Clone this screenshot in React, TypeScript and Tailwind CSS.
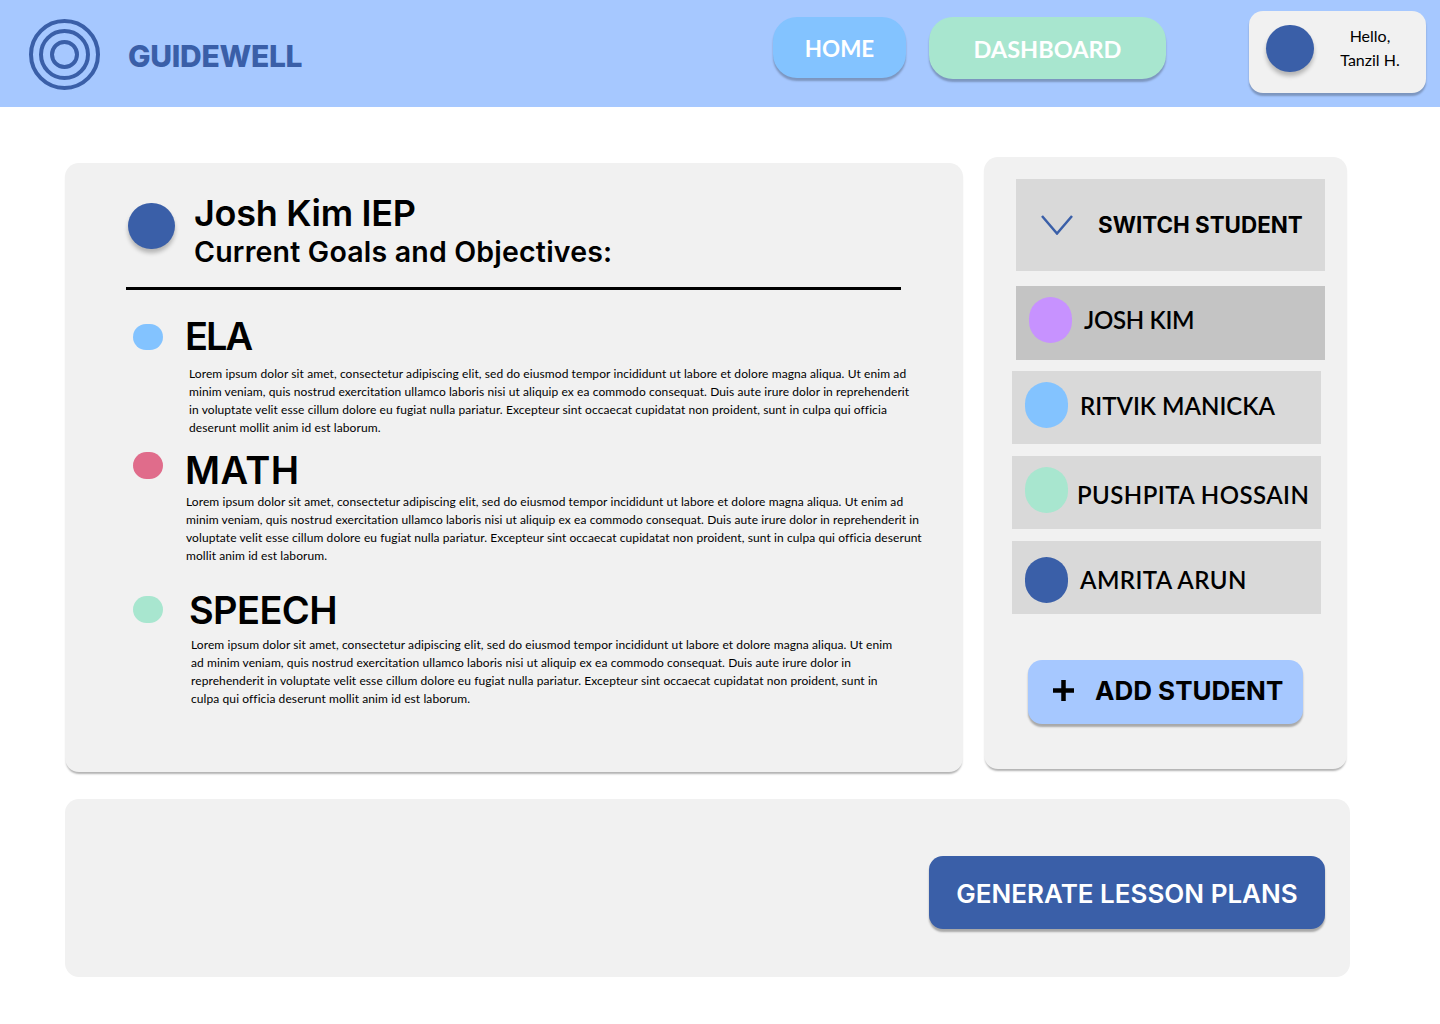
const poppins = "font-['Inter',sans-serif]";
const nunito = "font-['Lato',sans-serif]";

function Lines({ lines, className }: { lines: string[]; className: string }) {
  return (
    <div className={`${nunito} text-[12px] leading-[18px] tracking-[0.09px] text-black ${className}`}>
      {lines.map((line) => (
        <div key={line} className="whitespace-nowrap">
          {line}
        </div>
      ))}
    </div>
  );
}

function StudentRow({
  name,
  dot,
  className,
  textClass,
}: {
  name: string;
  dot: string;
  className: string;
  textClass: string;
}) {
  return (
    <div className={`flex w-[309px] h-[73px] items-start pl-[13px] ${className}`}>
      <div className={`w-[43px] h-[46px] rounded-full shrink-0 ${dot}`} />
      <span className={`${nunito} text-[24px] leading-[30px] font-semibold text-black whitespace-nowrap ${textClass}`}>
        {name}
      </span>
    </div>
  );
}

export default function App() {
  return (
    <div className="w-[1440px] h-[1024px] bg-white overflow-hidden">
      <header className="flex h-[107px] bg-[#a6c8ff]">
        <div className="ml-[29px] mt-[19px] w-[71px] h-[71px] shrink-0">
          <svg width="71" height="71" viewBox="0 0 71 71" fill="none" stroke="#3a5fa8" strokeWidth="4">
            <circle cx="35.5" cy="35.5" r="33.5" />
            <circle cx="35.5" cy="35.5" r="23.5" />
            <circle cx="35.5" cy="35.5" r="12.5" />
          </svg>
        </div>
        <div className={`${poppins} ml-[28px] mt-[35px] h-[42px] w-[620px] text-[30px] leading-[42px] tracking-[-0.3px] font-extrabold text-[#3a5fa8]`}>
          GUIDEWELL
        </div>
        <button className={`${nunito} ml-[25px] mt-[17px] w-[133px] h-[61px] pt-[3px] rounded-[24px] bg-[#83c3ff] text-[22.4px] font-bold text-white shadow-[0_3px_2px_rgba(0,0,0,0.25)]`}>
          HOME
        </button>
        <button className={`${nunito} ml-[23px] mt-[17px] w-[237px] h-[62px] pt-[3px] rounded-[24px] bg-[#a8e6cf] text-[23.5px] font-bold text-white shadow-[0_3px_2px_rgba(0,0,0,0.25)]`}>
          DASHBOARD
        </button>
        <div className="ml-[83px] mt-[11px] flex w-[177px] h-[82px] items-start rounded-[14px] bg-[#f1f1f1] shadow-[0_3px_2px_rgba(0,0,0,0.25)]">
          <div className="ml-[17px] mt-[14px] w-[48px] h-[47px] rounded-full bg-[#3a5fa8] shadow-[0_4px_4px_rgba(0,0,0,0.25)]" />
          <div className={`${nunito} ml-[18px] mt-[13px] w-[76px] text-center text-[16px] leading-[24px] text-black`}>
            <div>Hello,</div>
            <div>Tanzil H.</div>
          </div>
        </div>
      </header>

      <main className="pl-[65px]">
        <div className="flex items-start">
          <section className="mt-[56px] w-[898px] h-[609px] rounded-[14px] bg-[#f1f1f1] shadow-[0_3px_2px_-1px_rgba(0,0,0,0.3)]">
            <div className="flex pl-[63px] pt-[30px]">
              <div className="mt-[10px] w-[47px] h-[46px] rounded-full bg-[#3a5fa8] shadow-[0_4px_4px_rgba(0,0,0,0.25)]" />
              <div className="ml-[19px]">
                <h1 className={`${poppins} text-[36px] leading-[40px] tracking-[-0.3px] font-semibold text-black`}>Josh Kim IEP</h1>
                <h2 className={`${poppins} mt-[3px] text-[28.5px] leading-[32px] tracking-[0.2px] font-semibold text-black`}>
                  Current Goals and Objectives:
                </h2>
              </div>
            </div>
            <div className="ml-[61px] mt-[19px] w-[775px] h-[3px] bg-black" />

            <div className="flex items-start mt-[23px] pl-[68px]">
              <div className="mt-[11px] w-[30px] h-[26px] rounded-full bg-[#83c3ff]" />
              <div className={`${poppins} ml-[22px] text-[38px] leading-[46px] tracking-[-2px] font-semibold text-black`}>ELA</div>
            </div>
            <Lines
              className="ml-[124px] mt-[6px]"
              lines={[
                "Lorem ipsum dolor sit amet, consectetur adipiscing elit, sed do eiusmod tempor incididunt ut labore et dolore magna aliqua. Ut enim ad",
                "minim veniam, quis nostrud exercitation ullamco laboris nisi ut aliquip ex ea commodo consequat. Duis aute irure dolor in reprehenderit",
                "in voluptate velit esse cillum dolore eu fugiat nulla pariatur. Excepteur sint occaecat cupidatat non proident, sunt in culpa qui officia",
                "deserunt mollit anim id est laborum.",
              ]}
            />

            <div className="flex items-start mt-[15px] pl-[68px]">
              <div className="w-[30px] h-[27px] rounded-full bg-[#e06c8b]" />
              <div className={`${poppins} ml-[22px] mt-[-5px] text-[38px] leading-[46px] tracking-[0.4px] font-semibold text-black`}>MATH</div>
            </div>
            <Lines
              className="ml-[121px] mt-[0px]"
              lines={[
                "Lorem ipsum dolor sit amet, consectetur adipiscing elit, sed do eiusmod tempor incididunt ut labore et dolore magna aliqua. Ut enim ad",
                "minim veniam, quis nostrud exercitation ullamco laboris nisi ut aliquip ex ea commodo consequat. Duis aute irure dolor in reprehenderit in",
                "voluptate velit esse cillum dolore eu fugiat nulla pariatur. Excepteur sint occaecat cupidatat non proident, sunt in culpa qui officia deserunt",
                "mollit anim id est laborum.",
              ]}
            />

            <div className="flex items-start mt-[18px] pl-[68px]">
              <div className="mt-[13px] w-[30px] h-[27px] rounded-full bg-[#a8e6cf]" />
              <div className={`${poppins} ml-[26px] mt-[4px] text-[38px] leading-[46px] tracking-[-0.6px] font-semibold text-black`}>SPEECH</div>
            </div>
            <Lines
              className="ml-[126px] mt-[3px]"
              lines={[
                "Lorem ipsum dolor sit amet, consectetur adipiscing elit, sed do eiusmod tempor incididunt ut labore et dolore magna aliqua. Ut enim",
                "ad minim veniam, quis nostrud exercitation ullamco laboris nisi ut aliquip ex ea commodo consequat. Duis aute irure dolor in",
                "reprehenderit in voluptate velit esse cillum dolore eu fugiat nulla pariatur. Excepteur sint occaecat cupidatat non proident, sunt in",
                "culpa qui officia deserunt mollit anim id est laborum.",
              ]}
            />
          </section>

          <aside className="ml-[21px] mt-[50px] w-[363px] h-[612px] pt-[22px] rounded-[14px] bg-[#f1f1f1] shadow-[0_3px_2px_-1px_rgba(0,0,0,0.3)]">
            <div className="ml-[32px] flex w-[309px] h-[92px] items-center bg-[#d9d9d9]">
              <svg className="ml-[25px] shrink-0" width="32" height="20" viewBox="0 0 32 20" fill="none" stroke="#3a5fa8" strokeWidth="2.5">
                <path d="M1 1 L16 18.5 L31 1" />
              </svg>
              <span className={`${poppins} ml-[25px] text-[22.4px] font-bold text-black whitespace-nowrap`}>
                SWITCH STUDENT
              </span>
            </div>
            <StudentRow name="JOSH KIM" dot="mt-[11px] bg-[#c792ff]" className="ml-[32px] mt-[15px] h-[74px] bg-[#c4c4c4]" textClass="ml-[12px] mt-[19px] tracking-[-0.3px]" />
            <StudentRow name="RITVIK MANICKA" dot="mt-[11px] bg-[#83c3ff]" className="ml-[28px] mt-[11px] bg-[#d9d9d9]" textClass="ml-[12px] mt-[20px]" />
            <StudentRow name="PUSHPITA HOSSAIN" dot="mt-[11px] bg-[#a8e6cf]" className="ml-[28px] mt-[12px] bg-[#d9d9d9]" textClass="ml-[9px] mt-[24px] tracking-[0.45px]" />
            <StudentRow name="AMRITA ARUN" dot="mt-[16px] bg-[#3a5fa8]" className="ml-[28px] mt-[12px] bg-[#d9d9d9]" textClass="ml-[12px] mt-[24px] tracking-[0.4px]" />
            <button className="ml-[44px] mt-[46px] flex w-[275px] h-[64px] items-center rounded-[14px] bg-[#a6c8ff] shadow-[0_3px_2px_rgba(0,0,0,0.3)]">
              <svg className="ml-[25px] mt-[-4px] shrink-0" width="21" height="21" viewBox="0 0 21 21" fill="none" stroke="#000" strokeWidth="4.5">
                <path d="M0 10.5 H21 M10.5 0 V21" />
              </svg>
              <span className={`${poppins} ml-[21px] mt-[-3px] text-[26px] font-bold text-black whitespace-nowrap`}>ADD STUDENT</span>
            </button>
          </aside>
        </div>

        <section className="mt-[27px] flex w-[1285px] h-[178px] justify-end rounded-[14px] bg-[#f1f1f1] pr-[25px] pt-[57px]">
          <button className={`${poppins} w-[396px] h-[73px] pt-[2px] rounded-[14px] bg-[#3a5fa8] text-[26px] font-semibold text-white shadow-[0_3px_2px_rgba(0,0,0,0.3)]`}>
            GENERATE LESSON PLANS
          </button>
        </section>
      </main>
    </div>
  );
}
